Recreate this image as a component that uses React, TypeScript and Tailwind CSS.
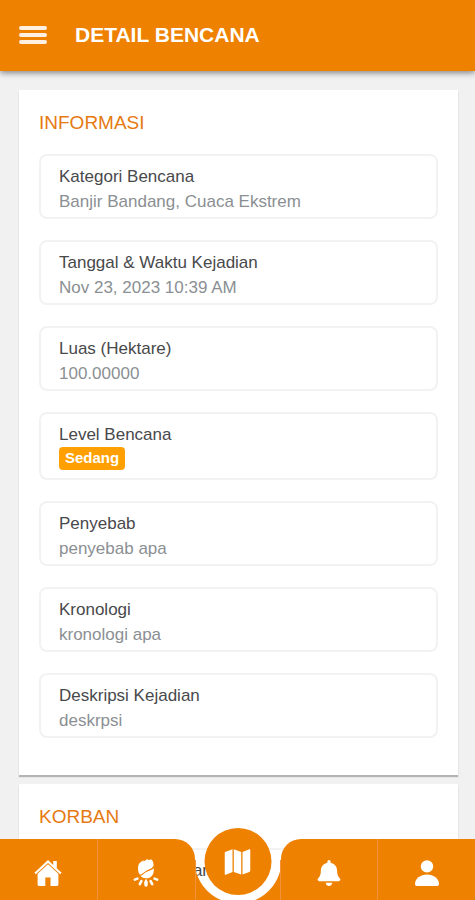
import { FaBell } from 'react-icons/fa'

type Info = { label: string; value?: string; badge?: boolean }

const INFORMASI: Info[] = [
  { label: 'Kategori Bencana', value: 'Banjir Bandang, Cuaca Ekstrem' },
  { label: 'Tanggal & Waktu Kejadian', value: 'Nov 23, 2023 10:39 AM' },
  { label: 'Luas (Hektare)', value: '100.00000' },
  { label: 'Level Bencana', value: 'Sedang', badge: true },
  { label: 'Penyebab', value: 'penyebab apa' },
  { label: 'Kronologi', value: 'kronologi apa' },
  { label: 'Deskripsi Kejadian', value: 'deskrpsi' },
]

const KORBAN: Info[] = [
  { label: 'Jumlah Total Keluarga (KK)' },
]

function HomeIcon() {
  return (
    <svg viewBox="0 0 28 26" className="h-[26px] w-7" fill="currentColor" aria-hidden="true">
      <path d="M14 0 .4 12.800l1.400 1.400L14 3l12.200 11.200 1.400-1.400-4.800-4.500V1h-3.600v3.900z" />
      <path d="M14 4.200 3.600 13.700v10.900Q3.600 26 5 26h6.300v-8.600h5.200V26H23q1.400 0 1.400-1.400V13.700z" />
    </svg>
  )
}

function MeteorIcon() {
  return (
    <svg viewBox="0 0 26 28" className="h-7 w-[26px]" fill="currentColor" aria-hidden="true">
      <path d="M6 4.800C7.600 2.600 9.400 1.600 11 1.400l-.6 1.400L14.400 0l.6 1 3.600-.4c1.400 1.600 2 3.600 2 6-1.200 3.200-4.600 3.800-7.600 5.400-2.600 1.400-3.800 3.800-6.400 3.600-2-3.400-2.200-7.600-.6-10.800z" />
      <path d="M7.200 16.800c2.800-.4 4-2.800 6.600-4 2.400-1.200 5-1.600 7-3.600.4 3.800-.6 7.400-3.800 9.200-3.400 1.700-7.400 1-9.800-1.600z" />
      <path d="m13 19.600 1.900 3.600-.4 3.800q-1.500 1.600-3 0l-.4-3.800z" />
      <g stroke="currentColor" strokeLinecap="round" strokeWidth="2.600">
        <path d="m8.400 22.200-1.600 3M17.600 22.200l1.600 3M4.400 19.600l-2.600 1M21.600 19.600l2.600 1" />
      </g>
    </svg>
  )
}

function MapIcon() {
  return (
    <svg viewBox="0 0 26 26" className="size-[26px]" fill="currentColor" aria-hidden="true">
      <path d="M1.200 2.800 8 .3v22.600L1.200 25.700Q0 26 0 24.800V4.400q0-1.200 1.200-1.600z" />
      <path d="M9.300.3 16.700 3v22.600l-7.400-2.700z" />
      <path d="M18 3 24.800.3Q26 0 26 1.200v20.400q0 1-1.200 1.400L18 25.600z" />
    </svg>
  )
}

function PersonIcon() {
  return (
    <svg viewBox="0 0 24 26" className="h-[26px] w-6" fill="currentColor" aria-hidden="true">
      <circle cx="12" cy="6.400" r="6.200" />
      <path d="M0 24c0-5 5.200-9.400 12-9.400S24 19 24 24q0 2-1.800 2H1.800Q0 26 0 24z" />
    </svg>
  )
}

function InfoCard({ title, items }: { title: string; items: Info[] }) {
  return (
    <section className="bg-white px-5 pt-[21px] pb-[37px] shadow-[0_2px_1px_rgba(0,0,0,0.25)]">
      <h2 className="text-[19px] leading-6 text-[#e67a12]">{title}</h2>
      <dl className="mt-[19px] flex flex-col gap-[21px]">
        {items.map(item => (
          <div key={item.label} className="rounded-lg border-2 border-[#f2f2f2] px-[18px] pt-2 pb-[3px] text-[17px]">
            <dt className="leading-[25px] text-[#48494b]">{item.label}</dt>
            {item.badge ? (
              <dd className="flex pb-[5px]">
                <span className="rounded bg-[#ffa000] px-1.5 pb-0.5 text-[15px] font-bold leading-[21px] text-white">{item.value}</span>
              </dd>
            ) : (
              <dd className="min-h-[25px] leading-[25px] text-[#8b8f93]">{item.value}</dd>
            )}
          </div>
        ))}
      </dl>
    </section>
  )
}

export default function App() {
  return (
    <div className="flex h-screen flex-col overflow-hidden bg-[#f1f1f1] font-['Liberation_Sans',Arial,sans-serif]">
      <header className="relative z-10 flex h-[71px] shrink-0 items-center gap-7 bg-[#ee8100] px-[19px] pb-0.5 shadow-[0_2px_6px_rgba(0,0,0,0.45)]">
        <button aria-label="Menu" className="flex w-7 flex-col gap-[3px]">
          <span className="h-1 rounded-xs bg-[#fff0e2]" />
          <span className="h-1 rounded-xs bg-[#fff0e2]" />
          <span className="h-1 rounded-xs bg-[#fff0e2]" />
        </button>
        <h1 className="text-[21px] font-bold text-white">DETAIL BENCANA</h1>
      </header>

      <main className="flex min-h-0 flex-1 flex-col gap-[9px] overflow-hidden pt-[19px] pr-[17px] pl-[19px] *:shrink-0">
        <InfoCard title="INFORMASI" items={INFORMASI} />
        <InfoCard title="KORBAN" items={KORBAN} />
      </main>

      <nav className="fixed inset-x-0 bottom-0 z-20 flex h-[61px] items-end text-white">
        <div className="flex h-full flex-1 rounded-tr-[20px] bg-[#ee8100]">
          <a href="#beranda" aria-label="Beranda" className="flex flex-1 items-center justify-center border-r border-[#f2923a] pt-1.5"><HomeIcon /></a>
          <a href="#bencana" aria-label="Bencana" className="flex flex-1 items-center justify-center pt-1.5"><MeteorIcon /></a>
        </div>
        {/* the notch: only the lower half of the cut-out circle lies in this column */}
        <div className="relative h-10 w-[86px] border-x border-[#f2923a] bg-[radial-gradient(circle_at_50%_0,transparent_43px,#ee8100_44px)]">
          <a href="#peta" aria-label="Peta" className="absolute -top-8 left-1/2 flex size-[67px] -translate-x-1/2 items-center justify-center rounded-full bg-[#ee8100]">
            <MapIcon />
          </a>
        </div>
        <div className="flex h-full flex-1 rounded-tl-[20px] bg-[#ee8100]">
          <a href="#notifikasi" aria-label="Notifikasi" className="flex flex-1 items-center justify-center border-r border-[#f2923a] pt-1.5"><FaBell className="size-[26px]" /></a>
          <a href="#profil" aria-label="Profil" className="flex flex-1 items-center justify-center pt-1.5"><PersonIcon /></a>
        </div>
      </nav>
    </div>
  )
}
